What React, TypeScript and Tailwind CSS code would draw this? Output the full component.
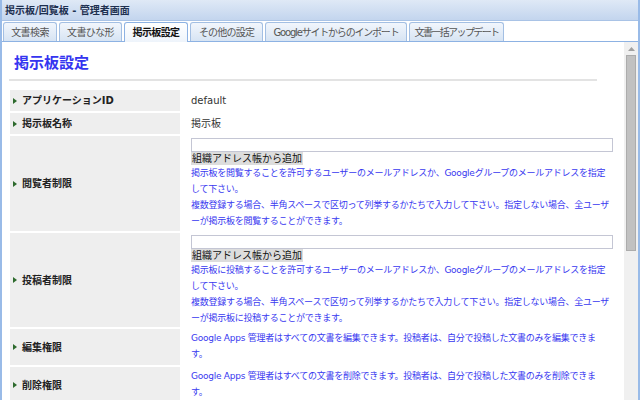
import React from 'react';

const jp = { fontFamily: '"DejaVu Sans", "Noto Sans CJK JP", sans-serif' };

const tabs = [
  { label: '文書検索', w: 'w-[54px]', t: 'tracking-[-0.6px]' },
  { label: '文書ひな形', w: 'w-[63px]', t: 'tracking-[-0.6px]' },
  { label: '掲示板設定', w: 'w-[64px]', t: 'tracking-[-0.6px]', active: true },
  { label: 'その他の設定', w: 'w-[73px]', t: 'tracking-[-0.8px]' },
  { label: 'Googleサイトからのインポート', w: 'w-[142px]', t: 'tracking-[-1.2px]' },
  { label: '文書一括アップデート', w: 'w-[95px]', t: 'tracking-[-1.6px]' },
];

const Bullet = () => (
  <svg width="4" height="6" viewBox="0 0 4 6" className="shrink-0">
    <path d="M0 0 L4 3 L0 6 Z" fill="#2d6a2d" />
  </svg>
);

const Label: React.FC<{ text: string; h: string }> = ({ text, h }) => (
  <div className={`${h} bg-[#eeeeee] flex items-center gap-[5px] pl-[3px] text-[10px] font-bold text-[#222]`}>
    <Bullet />
    <span>{text}</span>
  </div>
);

const Desc: React.FC<{ lines: string[] }> = ({ lines }) => (
  <div className="text-[9px] leading-[16px] text-[#3838f0] tracking-[-0.25px] whitespace-nowrap">
    {lines.map((l, i) => (
      <div key={i}>{l}</div>
    ))}
  </div>
);

const AddressField: React.FC<{ lines: string[] }> = ({ lines }) => (
  <div className="flex flex-col pt-[2px]">
    <div className="w-[422px] h-[14px] border border-[#c4c6d4] bg-white" />
    <div className="self-start h-[13px] px-[1px] bg-[#dddddd] text-[10px] leading-[13px] text-[#111]">
      組織アドレス帳から追加
    </div>
    <Desc lines={lines} />
  </div>
);

export default function App() {
  return (
    <div
      className="w-[640px] h-[400px] overflow-hidden bg-white flex flex-col border-x-2 border-[#99bbe8]"
      style={jp}
    >
      <div className="h-[21px] shrink-0 bg-gradient-to-b from-[#dfe9f6] to-[#c3d5ee] border-b border-[#a9c3e6] flex items-center pl-[3px] text-[10px] font-bold text-[#1e3050]">
        掲示板/回覧板 - 管理者画面
      </div>

      <div className="h-[21px] shrink-0 flex items-end gap-[2px] pl-[1px] border-b border-[#8db2e3]">
        {tabs.map((t) =>
          t.active ? (
            <div
              key={t.label}
              className={`${t.w} ${t.t} h-[20px] -mb-[1px] rounded-t-[3px] border border-b-0 border-[#8db2e3] bg-gradient-to-b from-[#ffffff] to-[#eef4fb] flex items-center justify-center whitespace-nowrap text-[10px] font-bold text-[#111]`}
            >
              {t.label}
            </div>
          ) : (
            <div
              key={t.label}
              className={`${t.w} ${t.t} h-[19px] rounded-t-[3px] border border-b-0 border-[#a3bfe3] bg-gradient-to-b from-[#f2f6fc] to-[#d7e4f3] flex items-center justify-center whitespace-nowrap text-[10px] text-[#555]`}
            >
              {t.label}
            </div>
          ),
        )}
      </div>

      <div className="flex-1 flex min-h-0">
        <div className="flex-1 overflow-hidden pl-[7px] pr-[8px]">
          <div className="pt-[10px] pl-[5px] h-[37px] text-[15px] font-bold text-[#3535f0] leading-[22px]">
            掲示板設定
          </div>
          <div className="w-[588px] h-[2px] bg-[#e3e3e3]" />

          <div className="grid grid-cols-[170px_1fr] gap-[2px] pl-[1px] pt-[9px]">
            <Label text="アプリケーションID" h="h-[21px]" />
            <div className="pl-[9px] flex items-center text-[10px] text-[#333]">default</div>

            <Label text="掲示板名称" h="h-[21px]" />
            <div className="pl-[9px] flex items-center text-[10px] text-[#333]">掲示板</div>

            <Label text="閲覧者制限" h="h-[95px]" />
            <div className="pl-[9px]">
              <AddressField
                lines={[
                  '掲示板を閲覧することを許可するユーザーのメールアドレスか、Googleグループのメールアドレスを指定',
                  'して下さい。',
                  '複数登録する場合、半角スペースで区切って列挙するかたちで入力して下さい。指定しない場合、全ユーザ',
                  'ーが掲示板を閲覧することができます。',
                ]}
              />
            </div>

            <Label text="投稿者制限" h="h-[94px]" />
            <div className="pl-[9px]">
              <AddressField
                lines={[
                  '掲示板に投稿することを許可するユーザーのメールアドレスか、Googleグループのメールアドレスを指定',
                  'して下さい。',
                  '複数登録する場合、半角スペースで区切って列挙するかたちで入力して下さい。指定しない場合、全ユーザ',
                  'ーが掲示板に投稿することができます。',
                ]}
              />
            </div>

            <Label text="編集権限" h="h-[36px]" />
            <div className="pl-[9px] pt-[1px]">
              <Desc
                lines={[
                  'Google Apps 管理者はすべての文書を編集できます。投稿者は、自分で投稿した文書のみを編集できま',
                  'す。',
                ]}
              />
            </div>

            <Label text="削除権限" h="h-[36px]" />
            <div className="pl-[9px] pt-[1px]">
              <Desc
                lines={[
                  'Google Apps 管理者はすべての文書を削除できます。投稿者は、自分で投稿した文書のみを削除できま',
                  'す。',
                ]}
              />
            </div>

            <div className="h-[20px] bg-[#eeeeee]" />
            <div className="h-[20px] border-t border-[#e6e6e6]" />
          </div>
        </div>

        <div className="w-[14px] shrink-0 bg-[#f0f0f0] flex flex-col items-center pt-[5px]">
          <svg width="7" height="4" viewBox="0 0 7 4">
            <path d="M0 4 L3.5 0 L7 4 Z" fill="#a0a0a0" />
          </svg>
          <div className="mt-[4px] w-[10px] h-[196px] bg-[#c1c1c1] border border-[#acacac]" />
        </div>
      </div>
    </div>
  );
}
